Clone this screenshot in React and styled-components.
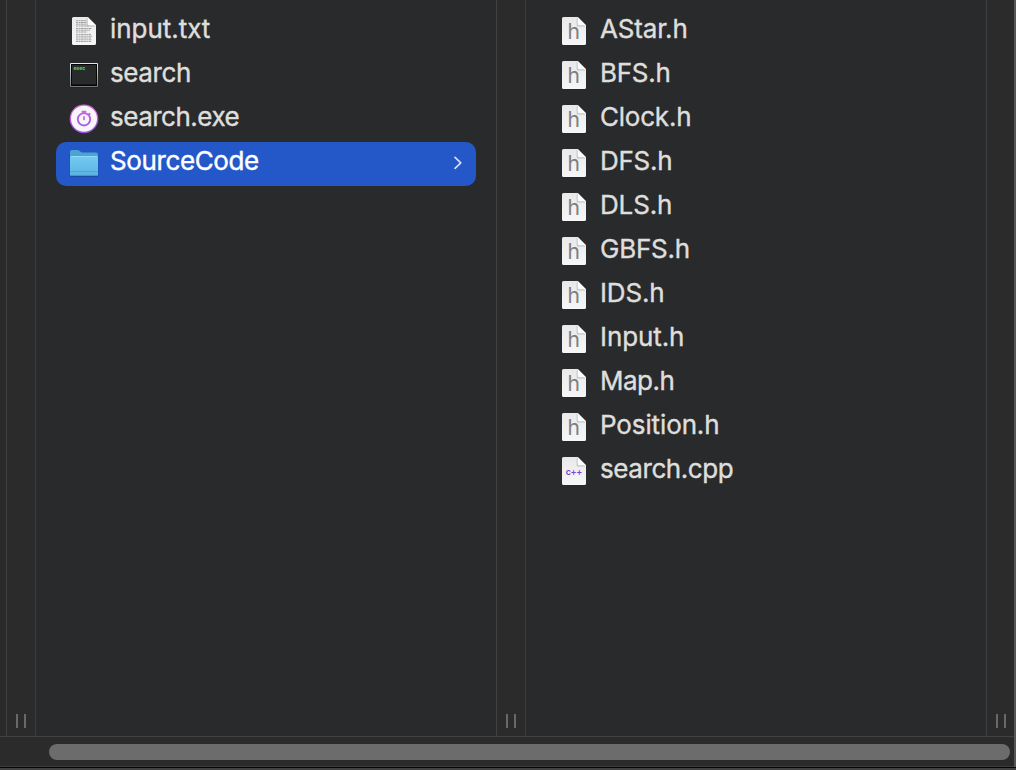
import React from "react";
import styled, { createGlobalStyle } from "styled-components";

const GlobalStyle = createGlobalStyle`
  html, body { margin: 0; background: #292a2c; overflow: hidden; }
  * { box-sizing: border-box; }
`;

const Window = styled.div`
  width: 1016px;
  height: 770px;
  display: flex;
  flex-direction: column;
  background: #292a2c;
  border-bottom: 2px solid #424242;
  font-family: Inter, "Liberation Sans", sans-serif;
  overflow: hidden;
`;

const Body = styled.div`
  display: flex;
  height: 767px;
  border-right: 2px solid #555655;
`;

const Browser = styled.div`
  flex: 1;
  display: flex;
  flex-direction: column;
`;

const Columns = styled.div`
  display: flex;
  height: 736px;
`;

const Sliver = styled.div`
  width: 6px;
`;

const Column = styled.ul`
  width: 460px;
  margin: 0;
  padding: 10px 20px 0;
  list-style: none;
`;

const Gutter = styled.div`
  width: ${(p) => (p.$last ? 28 : 30)}px;
  border-left: 1px solid #414141;
  border-right: ${(p) => (p.$last ? "none" : "1px solid #3b3c3d")};
  background: #2b2b2b;
  display: flex;
  align-items: flex-end;
  gap: 6px;
  padding: 0 0 8px 9px;
`;

const Grip = styled.span`
  width: 2px;
  height: 14px;
  background: #696969;
`;

const Row = styled.li`
  height: 44px;
  display: flex;
  align-items: center;
  padding: 0 12px 0 14px;
  border-radius: 10px;
  background: ${(p) => (p.$selected ? "#2458c9" : "transparent")};
  color: ${(p) => (p.$selected ? "#ffffff" : "#dededd")};
`;

const IconBox = styled.span`
  display: flex;
  width: 32px;
  height: 44px;
  margin: 0 10px 0 -2px;
  svg { display: block; overflow: visible; }
`;

const Name = styled.span`
  flex: 1;
  font-size: 26px;
  line-height: 32px;
  padding-bottom: 6px;
  white-space: nowrap;
  letter-spacing: ${(p) => p.$tracking}px;
  -webkit-text-stroke: 0.4px currentColor;
`;

const ScrollTrack = styled.div`
  height: 31px;
  border-top: 1px solid #414243;
  border-bottom: 1px solid #3d3d3d;
  background: #2b2b2b;
  padding: 7px 4px 0 49px;
`;

const Thumb = styled.div`
  height: 16px;
  border-radius: 8px;
  background: #6c6c6c;
`;

const BottomEdge = styled.div`
  height: 1px;
  background: #050505;
`;

const Glyph = styled.text`
  font-family: Inter, sans-serif;
  font-size: ${(p) => p.$size}px;
  font-weight: ${(p) => p.$weight};
  fill: ${(p) => p.$fill};
  letter-spacing: ${(p) => p.$tracking || 0}px;
  text-anchor: middle;
`;

function Page({ children }) {
  return (
    <svg width="32" height="44" viewBox="0 0 32 44">
      <defs>
        <linearGradient id="paper" x2="0" y2="1">
          <stop stopColor="#e9e9ea" />
          <stop offset="1" stopColor="#f7f7f7" />
        </linearGradient>
      </defs>
      <g transform="translate(4 7)">
        <path d="M1.5 .8H15.5L24 9v17.5a1.7 1.7 0 0 1-1.7 1.7H1.7A1.7 1.7 0 0 1 0 26.5v-24Z" fill="#151617" opacity=".55" />
        <path d="M1.5 0H15.7L24 8.3v18.2a1.5 1.5 0 0 1-1.5 1.5h-21A1.5 1.5 0 0 1 0 26.5v-25A1.5 1.5 0 0 1 1.5 0Z" fill="url(#paper)" />
        <path d="M14.7 .5 23.5 9.6h-7.3a1.5 1.5 0 0 1-1.5-1.5Z" fill="#a9a9ab" opacity=".6" />
        <path d="M15.7 0 24 8.3h-6.8a1.5 1.5 0 0 1-1.5-1.5Z" fill="#fcfcfc" />
        {children}
      </g>
    </svg>
  );
}

const HeaderIcon = () => (
  <Page>
    <Glyph x="11.7" y="22" $size={21} $weight={400} $fill="#7b8083">h</Glyph>
  </Page>
);

const CppIcon = () => (
  <Page>
    <Glyph x="11.8" y="18" $size={9} $weight={600} $fill="#8042df" $tracking={-0.4}>c++</Glyph>
  </Page>
);

const TextIcon = () => (
  <Page>
    <g stroke="#888" strokeWidth="1" opacity=".75" strokeDasharray="2.4 .5 1.3 .4 3.1 .5">
      <path d="M4 3.7h10M4 5.5h10.5M4 7.2h10M4 9h13M4 11.5h15.5M4 13.2h14M4 15h11M4 17.4h15M4 19.2h16M4 21h15M4 22.8h15.5M4 24.5h15" />
    </g>
  </Page>
);

const ExecIcon = () => (
  <svg width="32" height="44" viewBox="0 0 32 44">
    <defs>
      <linearGradient id="frame" x2="0" y2="1">
        <stop stopColor="#dceaf0" />
        <stop offset=".5" stopColor="#a9afb1" />
        <stop offset="1" stopColor="#77797a" />
      </linearGradient>
    </defs>
    <rect x="2" y="9.5" width="28" height="24" rx="1" fill="#151515" opacity=".7" />
    <rect x="2" y="9" width="28" height="24" rx="1" fill="url(#frame)" />
    <rect x="3" y="10" width="26" height="22" fill="#050606" />
    <rect x="4" y="11" width="24" height="19.5" fill="#292b2a" />
    <Glyph x="11.3" y="16.3" $size={5} $weight={800} $fill="#52c457">exec</Glyph>
  </svg>
);

const TimerIcon = () => (
  <svg width="32" height="44" viewBox="0 0 32 44">
    <defs>
      <linearGradient id="ring" x2="0" y2="1">
        <stop stopColor="#d568d8" />
        <stop offset="1" stopColor="#944ee2" />
      </linearGradient>
      <linearGradient id="dial" gradientUnits="userSpaceOnUse" x1="16" y1="13" x2="16" y2="28">
        <stop stopColor="#c569dd" />
        <stop offset="1" stopColor="#a05de8" />
      </linearGradient>
    </defs>
    <circle cx="16" cy="20.8" r="13.7" fill="#f7f5f8" stroke="url(#ring)" strokeWidth="1.3" />
    <g fill="none" stroke="url(#dial)" strokeWidth="1.9" strokeLinecap="round">
      <circle cx="16" cy="21.3" r="6.2" />
      <path d="M14.5 13.8h3M16 14v1.2M21.2 15.7l.5.5" />
      <path d="M16 18.7v2.8" strokeWidth="1.6" />
    </g>
  </svg>
);

const FolderIcon = () => (
  <svg width="32" height="44" viewBox="0 0 32 44">
    <defs>
      <linearGradient id="folder" x2="0" y2="1">
        <stop stopColor="#74cbf3" />
        <stop offset="1" stopColor="#5ab2e0" />
      </linearGradient>
    </defs>
    <path d="M1.7 13h28.6v20a2 2 0 0 1-2 2H3.7a2 2 0 0 1-2-2Z" fill="#173e88" opacity=".6" />
    <path d="M2 10a2 2 0 0 1 2-2h5.5c2.3 0 2.8 2.6 5 2.6H28a2 2 0 0 1 2 2v5H2Z" fill="#4aa5d2" />
    <path d="M2 15.5A1.5 1.5 0 0 1 3.5 14h25a1.5 1.5 0 0 1 1.5 1.5v17a1.5 1.5 0 0 1-1.5 1.5h-25A1.5 1.5 0 0 1 2 32.5Z" fill="url(#folder)" />
    <path d="M3 14.5h26" stroke="#91dafa" strokeWidth="1" />
    <path d="M2 29.5h28" stroke="#4ea8d4" strokeWidth="1" />
    <path d="M3 33.5h26" stroke="#4198c6" strokeWidth="1" />
  </svg>
);

const Chevron = () => (
  <svg width="12" height="18" viewBox="0 0 12 18">
    <path d="m3 2.3 5.8 5.5L3 13.3" fill="none" stroke="#d9e4fa" strokeWidth="1.6" strokeLinecap="round" strokeLinejoin="round" />
  </svg>
);

const icons = { txt: TextIcon, exec: ExecIcon, timer: TimerIcon, folder: FolderIcon, h: HeaderIcon, cpp: CppIcon };

const projectFiles = [
  { name: "input.txt", icon: "txt", tracking: -0.04 },
  { name: "search", icon: "exec", tracking: -0.4 },
  { name: "search.exe", icon: "timer", tracking: -0.5 },
  { name: "SourceCode", icon: "folder", tracking: -0.38, selected: true },
];

const sourceFiles = [
  { name: "AStar.h", icon: "h", tracking: -0.18 },
  { name: "BFS.h", icon: "h", tracking: -0.25 },
  { name: "Clock.h", icon: "h", tracking: -0.22 },
  { name: "DFS.h", icon: "h", tracking: -0.25 },
  { name: "DLS.h", icon: "h", tracking: -0.15 },
  { name: "GBFS.h", icon: "h", tracking: -0.25 },
  { name: "IDS.h", icon: "h", tracking: -0.15 },
  { name: "Input.h", icon: "h", tracking: -0.1 },
  { name: "Map.h", icon: "h", tracking: -0.5 },
  { name: "Position.h", icon: "h", tracking: -0.12 },
  { name: "search.cpp", icon: "cpp", tracking: -0.42 },
];

function FileColumn({ files }) {
  return (
    <Column>
      {files.map(({ name, icon, tracking, selected }) => {
        const Icon = icons[icon];
        return (
          <Row key={name} $selected={selected}>
            <IconBox><Icon /></IconBox>
            <Name $tracking={tracking}>{name}</Name>
            {selected && <Chevron />}
          </Row>
        );
      })}
    </Column>
  );
}

const Divider = ({ last }) => (
  <Gutter $last={last}><Grip /><Grip /></Gutter>
);

export default function App() {
  return (
    <>
      <GlobalStyle />
      <Window>
        <Body>
          <Browser>
            <Columns>
              <Sliver />
              <Divider />
              <FileColumn files={projectFiles} />
              <Divider />
              <FileColumn files={sourceFiles} />
              <Divider last />
            </Columns>
            <ScrollTrack><Thumb /></ScrollTrack>
          </Browser>
        </Body>
        <BottomEdge />
      </Window>
    </>
  );
}
